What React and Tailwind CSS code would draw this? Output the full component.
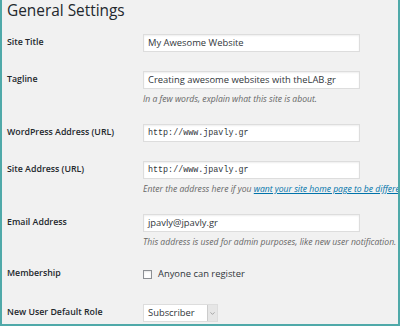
import { ChevronDown } from "lucide-react";

function Row({ label, children, className = "pt-[10px] pb-[9px]" }) {
  return (
    <div className={`flex ${className}`}>
      <div className="w-[136px] shrink-0 h-[18px] flex items-center text-[8.8px] font-semibold text-[#23282d]">
        {label}
      </div>
      <div className="flex-1 min-w-0">{children}</div>
    </div>
  );
}

function TextInput({ value, mono }) {
  return (
    <div
      className={`w-[217px] h-[18px] bg-white border border-[#dddddd] shadow-[inset_0_1px_2px_rgba(0,0,0,0.07)] flex items-center px-[4px] text-[#32373c] ${
        mono ? "font-['Liberation_Mono',monospace] text-[8.4px]" : "text-[9.4px]"
      }`}
    >
      {value}
    </div>
  );
}

function Desc({ children }) {
  return (
    <p className="mt-[4px] h-[12px] leading-[12px] text-[8.6px] italic text-[#666666] whitespace-nowrap">
      {children}
    </p>
  );
}

export default function App() {
  return (
    <div className="w-[400px] h-[326px] overflow-hidden bg-[#f1f1f1] border-x-2 border-b-2 border-[#4fa9a9] font-['Open_Sans',sans-serif]">
      <div className="pl-[5px]">
        <h1 className="h-[24px] leading-[21px] text-[15.4px] text-[#23282d]">General Settings</h1>

        <Row label="Site Title">
          <TextInput value="My Awesome Website" />
        </Row>

        <Row label="Tagline">
          <TextInput value="Creating awesome websites with theLAB.gr" />
          <Desc>In a few words, explain what this site is about.</Desc>
        </Row>

        <Row label="WordPress Address (URL)">
          <TextInput value="http://www.jpavly.gr" mono />
        </Row>

        <Row label="Site Address (URL)">
          <TextInput value="http://www.jpavly.gr" mono />
          <Desc>
            Enter the address here if you{" "}
            <span className="text-[#0073aa] underline">want your site home page to be different from your WordPress installation directory.</span>
          </Desc>
        </Row>

        <Row label="Email Address">
          <TextInput value="jpavly@jpavly.gr" />
          <Desc>This address is used for admin purposes, like new user notification.</Desc>
        </Row>

        <Row label="Membership" className="pt-[8px] pb-[11px]">
          <label className="h-[18px] flex items-center gap-[6px] text-[9.4px] text-[#32373c]">
            <span className="w-[9px] h-[9px] bg-white border border-[#8c8f94] shadow-[inset_0_1px_2px_rgba(0,0,0,0.1)]" />
            Anyone can register
          </label>
        </Row>

        <Row label="New User Default Role">
          <div className="w-[75px] h-[18px] flex bg-white border border-[#dddddd] text-[9.4px] text-[#32373c]">
            <span className="flex-1 flex items-center px-[4px]">Subscriber</span>
            <span className="w-[10px] flex items-center justify-center bg-[#e6e6e6] border-l border-[#cccccc]">
              <ChevronDown size={7} strokeWidth={2} className="text-[#777777]" />
            </span>
          </div>
        </Row>
      </div>
    </div>
  );
}
